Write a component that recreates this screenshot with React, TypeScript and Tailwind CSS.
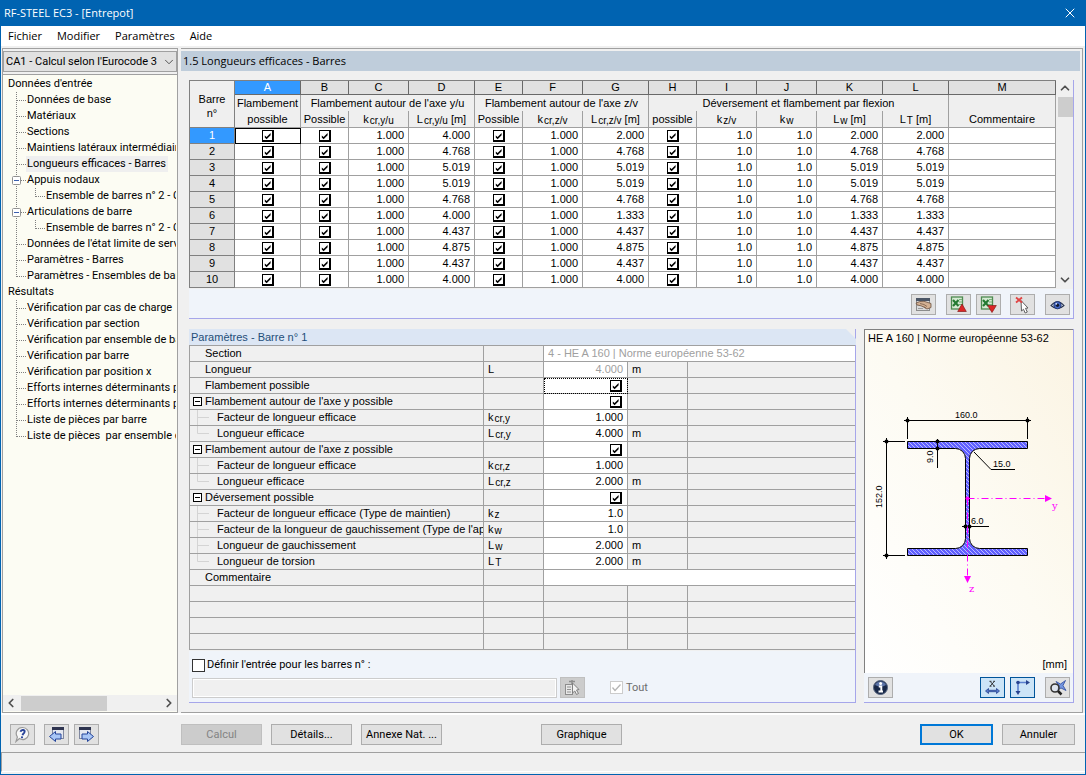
import { useState, type ReactNode } from "react";
import { ChevronDown, ChevronLeft, ChevronRight, ChevronUp, X } from "lucide-react";

type TreeItem = { text: string; level: 0 | 1 | 2; last?: boolean; box?: boolean; active?: boolean };

const tree: TreeItem[] = [
  { text: "Données d'entrée", level: 0 },
  { text: "Données de base", level: 1 },
  { text: "Matériaux", level: 1 },
  { text: "Sections", level: 1 },
  { text: "Maintiens latéraux intermédiaire", level: 1 },
  { text: "Longueurs efficaces - Barres", level: 1, active: true },
  { text: "Appuis nodaux", level: 1, box: true },
  { text: "Ensemble de barres n° 2 - C", level: 2 },
  { text: "Articulations de barre", level: 1, box: true },
  { text: "Ensemble de barres n° 2 - C", level: 2 },
  { text: "Données de l'état limite de serv", level: 1 },
  { text: "Paramètres - Barres", level: 1 },
  { text: "Paramètres - Ensembles de bar", level: 1, last: true },
  { text: "Résultats", level: 0 },
  { text: "Vérification par cas de charge", level: 1 },
  { text: "Vérification par section", level: 1 },
  { text: "Vérification par ensemble de ba", level: 1 },
  { text: "Vérification par barre", level: 1 },
  { text: "Vérification par position x", level: 1 },
  { text: "Efforts internes déterminants p", level: 1 },
  { text: "Efforts internes déterminants p", level: 1 },
  { text: "Liste de pièces par barre", level: 1 },
  { text: "Liste de pièces  par ensemble d", level: 1, last: true },
];

const lengths: [string, string][] = [
  ["4.000", "2.000"],
  ["4.768", "4.768"],
  ["5.019", "5.019"],
  ["5.019", "5.019"],
  ["4.768", "4.768"],
  ["4.000", "1.333"],
  ["4.437", "4.437"],
  ["4.875", "4.875"],
  ["4.437", "4.437"],
  ["4.000", "4.000"],
];

type Param = {
  name: string;
  kind: "root" | "group" | "child" | "lastChild";
  symbol?: [string, string];
  value?: string;
  check?: boolean;
  unit?: string;
  wide?: boolean;
  muted?: boolean;
  focus?: boolean;
};

const params: Param[] = [
  { name: "Section", kind: "root", value: "4 - HE A 160 | Norme européenne 53-62", wide: true, muted: true },
  { name: "Longueur", kind: "root", symbol: ["L", ""], value: "4.000", unit: "m", muted: true },
  { name: "Flambement possible", kind: "root", check: true, focus: true },
  { name: "Flambement autour de l'axe y possible", kind: "group", check: true },
  { name: "Facteur de longueur efficace", kind: "child", symbol: ["k", "cr,y"], value: "1.000" },
  { name: "Longueur efficace", kind: "lastChild", symbol: ["L", "cr,y"], value: "4.000", unit: "m" },
  { name: "Flambement autour de l'axe z possible", kind: "group", check: true },
  { name: "Facteur de longueur efficace", kind: "child", symbol: ["k", "cr,z"], value: "1.000" },
  { name: "Longueur efficace", kind: "lastChild", symbol: ["L", "cr,z"], value: "2.000", unit: "m" },
  { name: "Déversement possible", kind: "group", check: true },
  { name: "Facteur de longueur efficace (Type de maintien)", kind: "child", symbol: ["k", "z"], value: "1.0" },
  { name: "Facteur de la longueur de gauchissement (Type de l'app", kind: "child", symbol: ["k", "w"], value: "1.0" },
  { name: "Longueur de gauchissement", kind: "child", symbol: ["L", "w"], value: "2.000", unit: "m" },
  { name: "Longueur de torsion", kind: "lastChild", symbol: ["L", "T"], value: "2.000", unit: "m" },
  { name: "Commentaire", kind: "root", value: "", wide: true },
];

const grid = "border-r border-b border-[#a0a0a0] p-0 font-normal";

function Tick({ label }: { label: string }) {
  return (
    <span className="mt-0.5 inline-grid size-3 align-top">
      <input
        type="checkbox"
        defaultChecked
        aria-label={label}
        className="peer col-start-1 row-start-1 m-0 size-3 appearance-none border border-r-2 border-b-2 border-black bg-white"
      />
      <svg viewBox="0 0 12 12" className="pointer-events-none invisible col-start-1 row-start-1 size-3 peer-checked:visible">
        <path d="M2.8 5.4V7.6L4.6 9.2L8.6 5.2V3L4.6 7Z" fill="#000" />
      </svg>
    </span>
  );
}

function Symbol({ base, sub, after }: { base: string; sub: string; after?: string }) {
  return (
    <span className="whitespace-nowrap">
      {base}
      <span className="ml-px align-[-1px] text-[10px] leading-none">{sub}</span>
      {after ? " " + after : ""}
    </span>
  );
}

function TreeGuide({ item }: { item: TreeItem }) {
  if (item.level === 0) return <span className="w-1 shrink-0" />;
  const deep = item.level === 2;
  return (
    <svg width={deep ? 42 : 23} height="16" className="shrink-0" fill="none" stroke="#808080" strokeDasharray="1 1">
      <path d={item.last ? "M13.5 0V9" : "M13.5 0V16"} />
      {deep ? <path d="M32.5 0V9M33 8.5H42" /> : <path d="M14 8.5H23" />}
      {item.box && (
        <g strokeDasharray="none">
          <rect x="9.500" y="4.500" width="8" height="8" rx="1" fill="#fff" stroke="#919191" />
          <path d="M11 8.5H16" stroke="#3b5fae" />
        </g>
      )}
    </svg>
  );
}

function ToolButton({ label, tone = "plain", children }: { label: string; tone?: "plain" | "on" | "off"; children: ReactNode }) {
  const tones = {
    plain: "border-[#adadad] bg-[#e1e1e1]",
    on: "border-[#00549a] bg-[#cce4f7]",
    off: "border-[#bfbfbf] bg-[#cccccc]",
  };
  return (
    <button
      type="button"
      aria-label={label}
      disabled={tone === "off"}
      className={"flex h-[21px] w-[25px] shrink-0 items-center justify-center border " + tones[tone]}
    >
      {children}
    </button>
  );
}

function PushButton({ children, disabled = false, primary = false, wide = true }: { children: ReactNode; disabled?: boolean; primary?: boolean; wide?: boolean }) {
  const look = disabled
    ? "border border-[#bfbfbf] bg-[#cccccc] text-[#838383]"
    : primary
      ? "border-2 border-[#0078d7] bg-[#e1e1e1]"
      : "border border-[#adadad] bg-[#e1e1e1]";
  return (
    <button
      type="button"
      disabled={disabled}
      className={"flex h-[21px] shrink-0 items-center justify-center whitespace-nowrap " + (wide ? "w-[81px] " : "w-[73px] ") + look}
    >
      {children}
    </button>
  );
}

function HandIcon() {
  return (
    <svg width="17" height="16" viewBox="0 0 17 16">
      <rect x="1.500" y="1.500" width="13" height="12" fill="#dadada" stroke="#8b8b8b" />
      <path d="M1 1H15V4H1Z" fill="#4a5566" />
      <path d="M3 11.500H8" stroke="#9a9a9a" />
      <path d="M1 6L5 4.500L9 4.300L16 6.500V10.500L12 12L8.500 10L6 8.800L2 8Z" fill="#d3b092" stroke="#6b5140" strokeWidth=".8" />
      <path d="M5 6.500L9 7.500L12 9.500M8.500 9.500L11 11" stroke="#7a5d48" fill="none" strokeWidth=".8" />
    </svg>
  );
}

function ExcelIcon({ up }: { up: boolean }) {
  return (
    <svg width="17" height="17" viewBox="0 0 17 17">
      <rect x="1.500" y="1" width="11" height="12" fill="#d6ead3" stroke="#4e8a50" strokeWidth="1.300" />
      <path d="M9 3.500H12M9 6H12M9 8.500H12" stroke="#76b078" />
      <path d="M3 4L8.500 10M8.500 4L3 10" stroke="#247a32" strokeWidth="2.200" />
      <path d={up ? "M12 8L16.300 15.500H7.700Z" : "M7.700 9.500H16.300L12 16.500Z"} fill="#dc2626" stroke="#861a1a" strokeWidth=".7" />
    </svg>
  );
}

function PickIcon() {
  return (
    <svg width="17" height="18" viewBox="0 0 17 18">
      <path d="M7 4.500L14 12L11.500 12.300L13.300 16L11.200 17L9.500 13.300L7.500 15Z" fill="#fff" stroke="#606060" />
      <path d="M2 1.500L8 6.500M8 1.500L2 6.500" stroke="#e04444" strokeWidth="1.800" />
    </svg>
  );
}

function EyeIcon() {
  return (
    <svg width="15" height="12" viewBox="0 0 15 12">
      <path d="M1 6.500Q7.500 -1 14 6.500Q7.500 12.500 1 6.500Z" fill="#e6ecf6" stroke="#26324d" strokeWidth="1.100" />
      <circle cx="7.500" cy="6.200" r="3.700" fill="#4468c4" stroke="#1d2f66" strokeWidth=".8" />
      <circle cx="7.500" cy="6.200" r="1.700" fill="#101830" />
      <circle cx="6.300" cy="4.800" r=".9" fill="#dbe7ff" />
    </svg>
  );
}

function ListPickIcon() {
  return (
    <svg width="17" height="17" viewBox="0 0 17 17">
      <rect x="1.500" y="5.500" width="7" height="10" fill="#e8e8e8" stroke="#8d8d8d" />
      <path d="M3 8H7M3 10.500H7M3 13H7" stroke="#909090" />
      <path d="M5 2.500H11M8 1V5" stroke="#8d8d8d" strokeWidth="1.500" />
      <path d="M8.500 4L15 10.500L12.500 11L14.500 14.500L12.500 15.500L10.800 12L8.500 14Z" fill="#f2f2f2" stroke="#808080" />
    </svg>
  );
}

function HelpIcon() {
  return (
    <svg width="17" height="17" viewBox="0 0 17 17">
      <path d="M8.500 1.500A6 6 0 1 1 5.500 12.600L2 15.500L3.400 11A6 6 0 0 1 8.500 1.500Z" fill="#f7f7f7" stroke="#9a9a9a" strokeWidth="1.200" />
      <path d="M6.500 5.800Q7 3.700 9.200 4Q11.500 4.500 10.200 6.700Q8.800 7.800 8.500 9.200" fill="none" stroke="#274298" strokeWidth="1.900" />
      <circle cx="8" cy="11.300" r="1.100" fill="#274298" />
    </svg>
  );
}

function WindowArrowIcon({ next }: { next: boolean }) {
  return (
    <svg width="17" height="17" viewBox="0 0 17 17">
      <rect x={next ? 1.5 : 4.5} y="1.500" width="11" height="11" fill="#e4e7f0" stroke="#8088a0" />
      <path d={next ? "M1 1H13V4H1Z" : "M4 1H16V4H4Z"} fill="#2e3450" />
      <path
        d={next ? "M4 8H9.500V5.500L15.500 10.500L9.500 15.500V13H4Z" : "M13 8H7.500V5.500L1.500 10.500L7.500 15.500V13H13Z"}
        fill="#a9c6f6"
        stroke="#24449a"
      />
    </svg>
  );
}

function InfoIcon() {
  return (
    <svg width="17" height="17" viewBox="0 0 17 17">
      <circle cx="8.500" cy="8.500" r="7" fill="#182848" stroke="#56647f" />
      <path d="M3 6A6 6 0 0 1 14 6Q9 9 3 6Z" fill="#5c74a8" />
      <path d="M6.800 7.500H9.300V12.300M6.500 12.500H11" stroke="#fff" strokeWidth="1.900" fill="none" />
      <circle cx="8.600" cy="4.500" r="1.500" fill="#fff" />
    </svg>
  );
}

function DimensionIcon() {
  return (
    <svg width="17" height="17" viewBox="0 0 17 17">
      <path d="M6.300 2.500L10.200 7M10.200 2.500L6.300 7M5.500 2.300H7.500M9.200 2.300H11M5.500 7.200H7.500M9.200 7.200H11" stroke="#202020" strokeWidth=".9" />
      <path d="M1.500 12L4.500 9.500V11.300H12.500V9.500L15.500 12L12.500 14.500V12.700H4.500V14.500Z" fill="#5377cc" stroke="#27438f" strokeWidth=".8" />
    </svg>
  );
}

function AxesIcon() {
  return (
    <svg width="17" height="17" viewBox="0 0 17 17">
      <path d="M4 13V3.500H13" fill="none" stroke="#5b80cf" strokeWidth="1.600" />
      <path d="M12 1L16 3.500L12 6ZM1.500 12H6.500L4 16Z" fill="#27438f" />
      <circle cx="4" cy="3.500" r="1.800" fill="#27438f" />
    </svg>
  );
}

function ZoomResetIcon() {
  return (
    <svg width="18" height="17" viewBox="0 0 18 17">
      <path d="M7 2.500L11.500 5L16.500 1.500L14 6.500L17 11.500L12 9L8.500 11L10 6.500Z" fill="#7596e0" stroke="#2b489c" strokeWidth=".8" />
      <circle cx="6" cy="9" r="4" fill="#dde6f4" fillOpacity=".7" stroke="#333" strokeWidth="1.600" />
      <path d="M9 12L12.500 15.500" stroke="#222" strokeWidth="2.500" />
    </svg>
  );
}

function SectionDrawing() {
  return (
    <svg viewBox="0 18 208 308" className="mx-auto h-[308px] w-[208px] shrink-0" fontFamily="'Liberation Sans', Arial, sans-serif" fontSize="9">
      <defs>
        <pattern id="hatch" width="4" height="4" patternUnits="userSpaceOnUse">
          <rect width="4" height="4" fill="#6060ff" />
          <path d="M-1 -1L5 5M-1 3L1 5M3 -1L5 1" stroke="#c4c4ff" strokeWidth=".9" />
        </pattern>
      </defs>
      <path
        d="M42.500 111.500H162.500V118.500H114.500A10 10 0 0 0 104.500 128.500V208.500A10 10 0 0 0 114.500 218.500H162.500V225.500H42.500V218.500H90.500A10 10 0 0 0 100.500 208.500V128.500A10 10 0 0 0 90.500 118.500H42.500Z"
        fill="url(#hatch)"
        stroke="#000"
      />
      <g stroke="#000" fill="none">
        <path d="M39 90.500H166M42.500 87V109M162.500 87V109" />
        <path d="M21.500 108V229M18 111.500H40M18 225.500H40" />
        <path d="M72.500 109V138M97 196.500H124" />
        <path d="M109 122L126 139.500H150" />
      </g>
      <g fill="#000">
        <circle cx="42.500" cy="90.500" r="2" />
        <circle cx="162.500" cy="90.500" r="2" />
        <circle cx="21.500" cy="111.500" r="2" />
        <circle cx="21.500" cy="225.500" r="2" />
        <circle cx="72.500" cy="111.500" r="2" />
        <circle cx="72.500" cy="118.500" r="2" />
        <circle cx="100.500" cy="196.500" r="2" />
        <circle cx="104.500" cy="196.500" r="2" />
        <text x="90" y="88">160.0</text>
        <text x="128" y="137">15.0</text>
        <text x="106" y="194">6.0</text>
        <text transform="translate(17 178) rotate(-90)">152.0</text>
        <text transform="translate(68 133) rotate(-90)">9.0</text>
      </g>
      <g stroke="#ff00ff" strokeDasharray="7 3 1 3" fill="none">
        <path d="M102.500 168.500H181M102.500 168.500V246" />
      </g>
      <g fill="#ff00ff">
        <circle cx="102.500" cy="168.500" r="2" />
        <path d="M180 165V172L187 168.500ZM99 246H106L102.500 253Z" />
        <text x="187" y="179" fontFamily="'DejaVu Serif', serif" fontSize="10">y</text>
        <text x="104" y="262" fontFamily="'DejaVu Serif', serif" fontSize="10">z</text>
      </g>
    </svg>
  );
}

function BarTable() {
  const letters = "ABCDEFGHIJKLM".split("");
  const sub = "border-r border-[#a0a0a0] border-b p-0 pb-px font-normal";
  return (
    <table className="w-full min-w-0 flex-1 table-fixed border-separate border-spacing-0 border-t border-l border-[#808080] bg-[#efefef] text-center leading-[15px]">
      <colgroup>
        <col className="w-[45px]" />
        <col className="w-[66px]" />
        <col className="w-12" />
        <col className="w-[60px]" />
        <col className="w-[66px]" />
        <col className="w-12" />
        <col className="w-[60px]" />
        <col className="w-[66px]" />
        <col className="w-12" />
        <col className="w-[60px]" />
        <col className="w-[60px]" />
        <col className="w-[66px]" />
        <col className="w-[66px]" />
        <col />
      </colgroup>
      <thead>
        <tr className="h-[14px] leading-[13px]">
          <th rowSpan={3} className="border-r border-b border-[#808080] p-0 pt-1 leading-[14px] font-normal">
            Barre
            <br />
            n°
          </th>
          {letters.map((l, i) => (
            <th
              key={l}
              className={
                "border-r border-b border-[#696969] p-0 font-normal " +
                (i === 0 ? "bg-[#3399ff] text-white" : "bg-[#e1e1e1]")
              }
            >
              {l}
            </th>
          ))}
        </tr>
        <tr className="h-4 leading-[14px]">
          <th className="border-r border-[#a0a0a0] p-0 font-normal">Flambement</th>
          <th colSpan={3} className="border-r border-[#a0a0a0] p-0 font-normal">Flambement autour de l'axe y/u</th>
          <th colSpan={3} className="border-r border-[#a0a0a0] p-0 font-normal">Flambement autour de l'axe z/v</th>
          <th colSpan={5} className="border-r border-[#a0a0a0] p-0 font-normal">Déversement et flambement par flexion</th>
          <th className="border-r border-[#a0a0a0] p-0" />
        </tr>
        <tr className="h-[17px] leading-[14px]">
          <th className={sub}>possible</th>
          <th className={sub}>Possible</th>
          <th className={sub}><Symbol base="k" sub="cr,y/u" /></th>
          <th className={sub}><Symbol base="L" sub="cr,y/u" after="[m]" /></th>
          <th className={sub}>Possible</th>
          <th className={sub}><Symbol base="k" sub="cr,z/v" /></th>
          <th className={sub}><Symbol base="L" sub="cr,z/v" after="[m]" /></th>
          <th className={sub}>possible</th>
          <th className={sub}><Symbol base="k" sub="z/v" /></th>
          <th className={sub}><Symbol base="k" sub="w" /></th>
          <th className={sub}><Symbol base="L" sub="w" after="[m]" /></th>
          <th className={sub}><Symbol base="L" sub="T" after="[m]" /></th>
          <th className={sub}>Commentaire</th>
        </tr>
      </thead>
      <tbody className="bg-white">
        {lengths.map(([y, z], i) => {
          const num = grid + " pr-1 text-right";
          const n = i + 1;
          return (
            <tr key={n} className="h-4">
              <th
                scope="row"
                className={
                  "border-r border-b border-[#808080] p-0 font-normal " +
                  (i === 0 ? "bg-[#3399ff] text-white" : "bg-[#e1e1e1]")
                }
              >
                {n}
              </th>
              <td className={grid + (i === 0 ? " outline outline-1 -outline-offset-1 outline-black" : "")}>
                <Tick label={"Flambement possible, barre " + n} />
              </td>
              <td className={grid}><Tick label={"Flambement y/u, barre " + n} /></td>
              <td className={num}>1.000</td>
              <td className={num}>{y}</td>
              <td className={grid}><Tick label={"Flambement z/v, barre " + n} /></td>
              <td className={num}>1.000</td>
              <td className={num}>{z}</td>
              <td className={grid}><Tick label={"Déversement possible, barre " + n} /></td>
              <td className={num}>1.0</td>
              <td className={num}>1.0</td>
              <td className={num}>{z}</td>
              <td className={num}>{z}</td>
              <td className={grid} />
            </tr>
          );
        })}
      </tbody>
    </table>
  );
}

function ParamName({ p }: { p: Param }) {
  if (p.kind === "group")
    return (
      <span className="flex h-[15px] items-center gap-[3px] pl-[3px]">
        <button type="button" aria-label={"Réduire " + p.name} className="flex size-[9px] items-center justify-center border border-black bg-white">
          <span className="h-px w-[5px] bg-black" />
        </button>
        {p.name}
      </span>
    );
  if (p.kind === "root") return <span className="block pl-[15px]">{p.name}</span>;
  return (
    <span className="flex h-[15px] overflow-hidden">
      <svg width="27" height="15" className="shrink-0" stroke="#d4d4d4" fill="none">
        <path d={p.kind === "lastChild" ? "M7.500 0V7.500H19" : "M7.500 0V15M8 7.500H19"} />
      </svg>
      {p.name}
    </span>
  );
}

function ParamTable() {
  return (
    <table className="w-full table-fixed border-separate border-spacing-0 border-t border-l border-[#a0a0a0] text-left leading-[15px]">
      <colgroup>
        <col className="w-[294px]" />
        <col className="w-[60px]" />
        <col className="w-[84px]" />
        <col className="w-[60px]" />
        <col />
      </colgroup>
      <tbody>
        {params.map((p, i) => (
          <tr key={i} className="h-4">
            <th scope="row" className={grid + " overflow-hidden text-left whitespace-nowrap"}>
              <span className="block overflow-hidden"><ParamName p={p} /></span>
            </th>
            <td className={grid + " pl-1"}>{p.symbol && <Symbol base={p.symbol[0]} sub={p.symbol[1]} />}</td>
            {p.wide ? (
              <td colSpan={3} className="border-b border-[#a0a0a0] bg-white p-0 pl-1 text-[#a0a0a0]">{p.value}</td>
            ) : (
              <>
                <td
                  className={
                    grid +
                    " bg-white text-right" +
                    (p.check ? " pr-[5px]" : " pr-1") +
                    (p.muted ? " text-[#a0a0a0]" : "") +
                    (p.focus ? " outline-1 -outline-offset-1 outline-black outline-dotted" : "")
                  }
                >
                  {p.check ? <Tick label={p.name} /> : p.value}
                </td>
                <td className={grid + " pl-1"}>{p.unit}</td>
                <td className="border-b border-[#a0a0a0] p-0" />
              </>
            )}
          </tr>
        ))}
        {[0, 1, 2, 3].map((r) => (
          <tr key={"empty" + r} className="h-4">
            <td className={grid} />
            <td className={grid} />
            <td className={grid} />
            <td className={grid} />
            <td className="border-b border-[#a0a0a0] p-0" />
          </tr>
        ))}
      </tbody>
    </table>
  );
}

export default function App() {
  const [bars, setBars] = useState(false);
  return (
    <div className="flex min-h-screen flex-col border-x border-b border-[#0063b1] bg-[#f0f0f0] font-[Roboto,Tahoma,sans-serif] text-[11px] leading-4 text-black">
      <header className="flex h-[26px] items-center justify-between bg-[#0063b1] pr-[7px] pl-[3px] text-white">
        <h1 className="font-['Open_Sans',sans-serif]">RF-STEEL EC3 - [Entrepot]</h1>
        <button type="button" aria-label="Fermer" className="flex items-center">
          <X size={16} strokeWidth={1.5} />
        </button>
      </header>
      <nav className="flex h-5 items-center gap-[15px] bg-white pl-[7px] font-['Open_Sans',sans-serif]">
        <button type="button">Fichier</button>
        <button type="button">Modifier</button>
        <button type="button">Paramètres</button>
        <button type="button">Aide</button>
      </nav>

      <div className="mt-0.5 flex flex-1">
        <aside className="ml-px flex w-[176px] shrink-0 flex-col border border-[#a0a0a0]">
          <div className="grid pt-0.5 pb-[2px]">
            <select
              aria-label="Cas de calcul"
              className="col-start-1 row-start-1 h-[21px] w-full appearance-none border border-[#a0a0a0] bg-[#e1e1e1] pl-[2px]"
            >
              <option>CA1 - Calcul selon l'Eurocode 3</option>
            </select>
            <ChevronDown size={14} strokeWidth={1.5} className="pointer-events-none col-start-1 row-start-1 mr-px self-center justify-self-end text-[#404040]" />
          </div>
          <div className="flex flex-1 flex-col overflow-hidden border-t border-[#a0a0a0] bg-[#fcfcf3]">
            <ul className="mr-px pt-px">
              {tree.map((item, i) => (
                <li key={i} className="flex h-4 items-center overflow-hidden whitespace-pre">
                  <TreeGuide item={item} />
                  <a href={"#n" + i} className={item.active ? "bg-[#efefef] pr-0.5 pl-px" : "pl-px"}>
                    {item.text}
                  </a>
                </li>
              ))}
            </ul>
            <div className="mt-auto mb-px flex h-4 items-center gap-[3px] bg-[#f0f0f0] px-px text-[#505050]">
              <ChevronLeft size={14} strokeWidth={3} />
              <div className="h-[15px] w-1/2 bg-[#cdcdcd]" />
              <ChevronRight size={14} strokeWidth={3} className="ml-auto" />
            </div>
          </div>
        </aside>

        <main className="mr-0.5 ml-[3px] flex min-w-0 flex-1 flex-col border-t border-r border-b border-[#a0a0a0]">
          <h2 className="mt-0.5 mr-0.5 h-5 bg-[#bfcddb] pl-0.5 font-['Open_Sans',sans-serif] leading-5">1.5 Longueurs efficaces - Barres</h2>

          <div className="flex flex-1 flex-col gap-[10px] px-2 py-[9px] font-['Liberation_Sans',Arial,sans-serif]">
            <section className="flex flex-col border-r border-b border-[#a6a6ea] bg-[#f0f4fa]">
              <div className="flex bg-[#f0f0f0] pb-px">
                <BarTable />
                <div className="ml-px flex w-4 shrink-0 flex-col items-center bg-[#f0f0f0] py-px text-[#505050]">
                  <ChevronUp size={14} strokeWidth={3} />
                  <div className="mt-0.5 h-5 w-[15px] bg-[#cdcdcd]" />
                  <ChevronDown size={14} strokeWidth={3} className="mt-auto" />
                </div>
              </div>
              <div className="flex h-[29px] items-center justify-end pt-0.5 pr-[3px]">
                <ToolButton label="Sélection"><HandIcon /></ToolButton>
                <div className="mr-[9px] ml-[10px] flex gap-[5px]">
                  <ToolButton label="Exporter vers Excel"><ExcelIcon up /></ToolButton>
                  <ToolButton label="Importer depuis Excel"><ExcelIcon up={false} /></ToolButton>
                </div>
                <div className="flex gap-[10px]">
                  <ToolButton label="Choisir une barre"><PickIcon /></ToolButton>
                  <ToolButton label="Mode de vue"><EyeIcon /></ToolButton>
                </div>
              </div>
            </section>

            <div className="flex flex-1 gap-2">
              <section className="flex min-w-0 flex-1 flex-col border-r border-b border-[#a6a6ea] bg-[#f0f0f0]">
                <h3 className="-mr-px h-4 bg-[#dce6f4] pl-0.5 text-[#1f4e79] [clip-path:polygon(0_0,calc(100%-10px)_0,100%_10px,100%_100%,0_100%)]">
                  Paramètres - Barre n° 1
                </h3>
                <ParamTable />
                <div className="mt-px flex flex-1 flex-col gap-1 bg-[#f0f4fa] pt-[6px] pb-1 pl-[3px] font-[Roboto,Tahoma,sans-serif]">
                  <label className="flex items-center gap-0.5">
                    <input
                      type="checkbox"
                      checked={bars}
                      onChange={(e) => setBars(e.target.checked)}
                      className="m-0 size-[13px] appearance-none border border-[#333] bg-white checked:bg-[#0078d7]"
                    />
                    Définir l'entrée pour les barres n° :
                  </label>
                  <div className="flex items-center">
                    <input disabled={!bars} aria-label="Barres n°" className="h-5 w-[365px] border border-[#cccccc] bg-[#f0f0f0] px-1 shadow-[inset_0_0_0_1px_#fff]" />
                    <span className="ml-[3px]"><ToolButton label="Choisir les barres" tone="off"><ListPickIcon /></ToolButton></span>
                    <label className="ml-[25px] flex items-center gap-[3px] text-[#6d6d6d]">
                      <span className="grid size-[13px]">
                        <input type="checkbox" defaultChecked disabled className="col-start-1 row-start-1 m-0 size-[13px] appearance-none border border-[#cccccc] bg-white" />
                        <svg viewBox="0 0 13 13" className="col-start-1 row-start-1 size-[13px]">
                          <path d="M2.500 6.500L5 9.500L10.500 3.500" fill="none" stroke="#b5b5b5" strokeWidth="1.300" />
                        </svg>
                      </span>
                      Tout
                    </label>
                  </div>
                </div>
              </section>

              <section className="flex w-[210px] shrink-0 flex-col border-r border-b border-[#a6a6ea] bg-[#f0f4fa]">
                <div className="flex flex-1 flex-col border-t border-l border-[#808080] bg-linear-to-tr from-white via-[#fdfbf3] to-[#fbf4e3]">
                  <p className="h-[18px] pl-[3px] whitespace-nowrap">HE A 160 | Norme européenne 53-62</p>
                  <SectionDrawing />
                  <p className="mt-auto pr-1.5 pb-px text-right">[mm]</p>
                </div>
                <div className="flex h-[29px] items-center gap-[5px] pr-[3px] pl-1">
                  <ToolButton label="Informations"><InfoIcon /></ToolButton>
                  <span className="ml-auto" />
                  <ToolButton label="Cotes" tone="on"><DimensionIcon /></ToolButton>
                  <ToolButton label="Axes" tone="on"><AxesIcon /></ToolButton>
                  <span className="ml-[5px]"><ToolButton label="Réinitialiser le zoom"><ZoomResetIcon /></ToolButton></span>
                </div>
              </section>
            </div>
          </div>
        </main>
      </div>

      <footer>
        <div className="flex h-[39px] items-center border-t-2 border-white pt-[5px] pr-[10px] pb-[3px] pl-[9px]">
          <ToolButton label="Aide"><HelpIcon /></ToolButton>
          <span className="mr-[82px] ml-[9px] flex gap-[5px]">
            <ToolButton label="Précédent"><WindowArrowIcon next={false} /></ToolButton>
            <ToolButton label="Suivant"><WindowArrowIcon next /></ToolButton>
          </span>
          <div className="flex gap-[9px]">
            <PushButton disabled>Calcul</PushButton>
            <PushButton>Détails...</PushButton>
            <PushButton>Annexe Nat. ...</PushButton>
          </div>
          <span className="ml-[99px]"><PushButton>Graphique</PushButton></span>
          <div className="ml-auto flex gap-[9px]">
            <PushButton primary wide={false}>OK</PushButton>
            <PushButton wide={false}>Annuler</PushButton>
          </div>
        </div>
        <div className="mb-0.5 h-5 border-t border-b border-l border-t-[#a0a0a0] border-b-white border-l-[#a0a0a0]" />
      </footer>
    </div>
  );
}
